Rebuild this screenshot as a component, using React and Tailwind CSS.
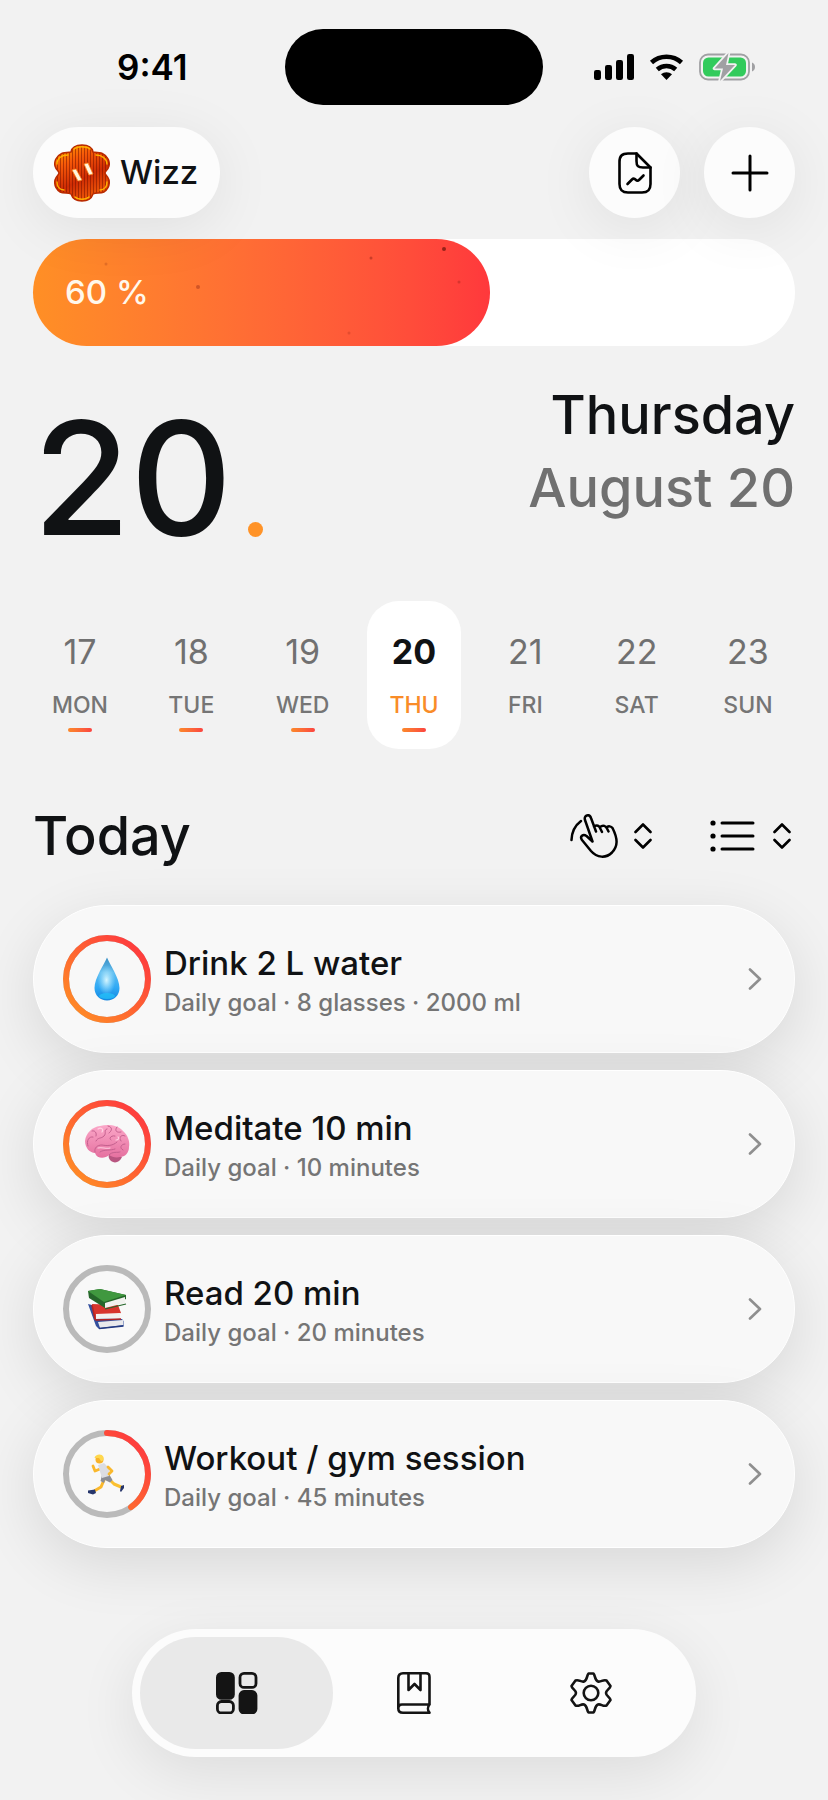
const week = [
  { date: 17, name: 'MON', done: true },
  { date: 18, name: 'TUE', done: true },
  { date: 19, name: 'WED', done: true },
  { date: 20, name: 'THU', done: true },
  { date: 21, name: 'FRI', done: false },
  { date: 22, name: 'SAT', done: false },
  { date: 23, name: 'SUN', done: false },
]

const habits = [
  { title: 'Drink 2 L water', goal: 'Daily goal · 8 glasses · 2000 ml', progress: 1, Icon: Drop },
  { title: 'Meditate 10 min', goal: 'Daily goal · 10 minutes', progress: 1, Icon: Brain },
  { title: 'Read 20 min', goal: 'Daily goal · 20 minutes', progress: 0, Icon: Books },
  { title: 'Workout / gym session', goal: 'Daily goal · 45 minutes', progress: 0.4, Icon: Runner },
]

function Drop() {
  return (
    <svg className="w-[46px] h-[46px]" viewBox="0 0 46 46">
      <defs>
        <linearGradient id="drop" x1="0" y1="0" x2="0" y2="1">
          <stop offset="0" stopColor="#3a8fc4" />
          <stop offset="0.35" stopColor="#5fbdf0" />
          <stop offset="0.7" stopColor="#2fa9f5" />
          <stop offset="1" stopColor="#1486e0" />
        </linearGradient>
        <radialGradient id="dropShine" cx="0.5" cy="0.5" r="0.5">
          <stop offset="0" stopColor="#d6f6ff" />
          <stop offset="1" stopColor="#a5e6ff" stopOpacity="0" />
        </radialGradient>
      </defs>
      <path d="M23 1.500C26 9 35.500 22 35.500 32C35.500 39.500 30 44.500 23 44.500S10.500 39.500 10.500 32C10.500 22 20 9 23 1.500Z" fill="url(#drop)" />
      <ellipse cx="22.500" cy="24" rx="9" ry="15" fill="url(#dropShine)" />
      <ellipse cx="23" cy="40" rx="8" ry="3" fill="#25c4fb" opacity="0.7" />
    </svg>
  )
}

function Brain() {
  return (
    <svg className="w-[46px] h-[46px]" viewBox="0 0 46 46" strokeLinecap="round">
      <defs>
        <linearGradient id="brain" x1="0" y1="0" x2="0" y2="1">
          <stop offset="0" stopColor="#fba7c8" />
          <stop offset="1" stopColor="#e5709f" />
        </linearGradient>
      </defs>
      <path d="M25 34C29 33 35 33 38 36C36 41 31 43 27 40C25 38 24 36 25 34Z" fill="#b85580" />
      <path d="M1 20C2 12 8 6 16 5C24 3 34 4 39 10C44 14 46 21 45 26C45 32 41 36 36 36C32 37 28 36 25 34C21 38 13 38 11 32C6 32 1 27 1 20Z" fill="url(#brain)" />
      <path d="M11 31C10 27 13 24 18 24C23 25 29 25 33 21M4 25C2 20 5 15 9 16M8 10C11 9 13 12 12 15M12 20C14 16 17 18 20 15S19 9 23 8M24 5C29 6 28 10 25 12M27 19C24 17 28 14 31 15M33 6C30 10 33 12 37 11M37 20C34 16 38 13 41 15M39 29C35 27 37 23 41 23M16 31C20 28 26 30 31 28M25 34C28 30 34 32 36 31" fill="none" stroke="#c4608e" strokeWidth="1" />
      <path d="M14 8C17 6 20 8 18 11M34 16C36 17 34 19 32 19M14 27C18 26 22 28 26 27" fill="none" stroke="#ffd0e2" strokeWidth="1.200" />
    </svg>
  )
}

function Books() {
  return (
    <svg className="w-[46px] h-[46px]" viewBox="0 0 46 46" strokeLinejoin="round">
      <path d="M4 18L8 19L12 32L38 33L39.500 35L39.500 40L15 43L12 40Z" fill="#34509e" />
      <path d="M14 36L39 34L39 39L16 42Z" fill="#e9e9ec" />
      <path d="M15 42.500L39.500 40" stroke="#243a80" strokeWidth="1.500" />
      <path d="M8 18L34 19L37 27L11 33Z" fill="#d7352d" />
      <path d="M8 19L11 33L12 34L37 33" fill="none" stroke="#b52321" strokeWidth="1.500" />
      <path d="M12 28L36 27L36 32L12 33Z" fill="#f2f1ef" />
      <path d="M4 5L16 3L42 9L42 13L21 22L5 12Z" fill="#25662a" />
      <path d="M4 5L16 3L42 9L20 16Z" fill="#40983f" />
      <path d="M21 17L41 11L41 17L21 22Z" fill="#f1f1ee" />
      <path d="M21 23L42 18" stroke="#25662a" strokeWidth="1.200" />
    </svg>
  )
}

function Runner() {
  return (
    <svg className="w-[46px] h-[46px]" viewBox="0 0 46 46" fill="none" strokeLinecap="round" strokeLinejoin="round">
      <path d="M16 18L11 20L9 15" stroke="#fab82c" strokeWidth="2.800" />
      <path d="M20 29L17 36L11 39.500" stroke="#fab82c" strokeWidth="3" />
      <path d="M26 29L30 33L37 36" stroke="#fbc02f" strokeWidth="3" />
      <path d="M4 39.500L11 38.500L12 42L9 43.500L4 42Z" fill="#26356b" />
      <path d="M40 34L40 37L37 41L36 40L37 35Z" fill="#26356b" />
      <path d="M18 24L25 23L28.500 29L26 31.500L21 29L20 32L16.500 30Z" fill="#8b8d94" />
      <path d="M14 14L20 12L25 17L25 25L18 27Z" fill="#dcdde2" />
      <path d="M24 16L28 20L25 23" stroke="#fab82c" strokeWidth="2.800" />
      <circle cx="15.500" cy="8.500" r="4" fill="#f8b32a" />
      <path d="M10.500 7C11 3 18 2 19.500 6C20 9 18 11 17 10L15 7Z" fill="#ffd84e" />
    </svg>
  )
}

function Avatar() {
  return (
    <svg className="w-14 h-[58px]" viewBox="0 0 56 58">
      <defs>
        <linearGradient id="avatar" x1="0.100" y1="0" x2="0.600" y2="1">
          <stop offset="0" stopColor="#ffa200" />
          <stop offset="0.300" stopColor="#f85a08" />
          <stop offset="0.650" stopColor="#cf2c04" />
          <stop offset="1" stopColor="#f05a08" />
        </linearGradient>
        <pattern id="ribs" width="3" height="58" patternUnits="userSpaceOnUse">
          <rect width="1" height="58" fill="#6e0f00" opacity="0.500" />
        </pattern>
        <path id="flower" d="M17 8C18 3 21 1 28 1S38 3 39 8C42 9 47 8 49 10C54 12 56 18 55 22C54 26 51 27 51 29S54 32 55 36C56 41 54 45 50 48C46 50 42 48 39 50C37 56 33 57 28 57S19 56 17 50C14 48 10 50 6 48C2 45 0 41 1 36C2 32 5 31 5 29S2 26 1 22C0 18 2 12 7 10C9 8 14 9 17 8Z" />
      </defs>
      <use href="#flower" fill="url(#avatar)" />
      <use href="#flower" fill="url(#ribs)" stroke="#b92a00" strokeWidth="1.500" />
      <path d="M3 20C3 14 8 11 14 11M42 11C48 11 53 15 53 20M20 5C23 2 33 2 36 5M3 38C3 43 6 46 10 46M53 38C53 43 50 46 46 46M21 53C24 56 32 56 35 53" fill="none" stroke="#ffb000" strokeWidth="1.400" strokeLinecap="round" />
      <path d="M18 26L22 25L28 36L24 37ZM30 20L34 19L39 30L35 31Z" fill="#fff6e0" stroke="#ff8a1f" strokeWidth="0.800" />
    </svg>
  )
}

function UpDown() {
  return (
    <svg className="w-[18px] h-[26px]" viewBox="0 0 18 26" fill="none" stroke="currentColor" strokeWidth="2.600" strokeLinecap="round" strokeLinejoin="round">
      <path d="M1.500 9L9 1.500L16.500 9M1.500 17L9 24.500L16.500 17" />
    </svg>
  )
}

function StatusBar() {
  return (
    <div className="grid grid-cols-[1fr_258px_1fr] items-center h-[76px]">
      <div className="pl-[84px] text-[35px] leading-10 font-semibold text-black">9:41</div>
      <div className="h-[76px] rounded-full bg-black" />
      <div className="flex items-center pl-[51px]">
        <svg className="w-10 h-[26px]" viewBox="0 0 40 26">
          <rect x="0" y="16" width="7" height="10" rx="2.200" />
          <rect x="11" y="11" width="7" height="15" rx="2.200" />
          <rect x="22" y="6" width="7" height="20" rx="2.200" />
          <rect x="33" y="0" width="7" height="26" rx="2.200" />
        </svg>
        <svg className="ml-[15px] w-[35px] h-[26px]" viewBox="0 0 35 26">
          <path d="M2.500 8.500C11 0.800 24 0.800 32.500 8.500M8.300 15.500C13.500 10.800 21.500 10.800 26.700 15.500" fill="none" stroke="#000" strokeWidth="4.600" />
          <path d="M12 20.300C15 17.500 20 17.500 23 20.300L17.500 26Z" />
        </svg>
        <svg className="ml-[15px] w-[57px] h-7" viewBox="0 0 57 28">
          <rect x="1" y="1.500" width="49" height="25" rx="8" fill="none" stroke="#a0a0a3" strokeWidth="1.800" />
          <path d="M53 9.500C57 11 57 17 53 18.500Z" fill="#a0a0a3" />
          <rect x="4" y="4.500" width="43" height="19" rx="5.500" fill="#32cb5c" />
          <path d="M29.500 0L15.500 15.500H24L21 28L36 12H27Z" fill="#a0a0a3" stroke="#f2f2f2" strokeWidth="3.500" strokeLinejoin="round" paintOrder="stroke" />
        </svg>
      </div>
    </div>
  )
}

function Header() {
  const round = 'flex items-center justify-center size-[91px] rounded-full bg-[#fcfcfc] shadow-[0_10px_60px_rgba(0,0,0,0.080)]'
  return (
    <header className="relative z-10 mt-[22px] flex items-center justify-between">
      <button className="flex items-center gap-2.5 h-[91px] pl-[21px] pr-[22px] rounded-full bg-[#fcfcfc] text-[33px] font-medium shadow-[0_10px_60px_rgba(0,0,0,0.080)]">
        <Avatar />
        Wizz
      </button>
      <div className="flex gap-6">
        <button className={round} aria-label="Report">
          <svg className="w-[34px] h-[42px]" viewBox="0 0 34 42" fill="none" stroke="#000" strokeWidth="2.600" strokeLinecap="round" strokeLinejoin="round">
            <path d="M18.500 1.500H10C4 1.500 1.500 4 1.500 10V32C1.500 38 4 40.500 10 40.500H24C30 40.500 32.500 38 32.500 32V15.500L18.500 1.500Z" />
            <path d="M18.500 1.500V9C18.500 14 20 15.500 25 15.500H32.500" />
            <path d="M9.500 32L14 27.500C15.500 26 16.500 26.500 18 28S20 29 21.500 27.500L25.500 23.500" />
          </svg>
        </button>
        <button className={round} aria-label="Add habit">
          <svg className="size-[38px]" viewBox="0 0 38 38" stroke="#000" strokeWidth="3" strokeLinecap="round">
            <path d="M19 2V36M2 19H36" />
          </svg>
        </button>
      </div>
    </header>
  )
}

function HabitCard({ habit, index }) {
  const { title, goal, progress, Icon } = habit
  return (
    <a href="#" className="flex items-center h-[148px] pl-7 pr-8 rounded-full bg-[#f8f8f8] border border-white shadow-[0_16px_60px_rgba(0,0,0,0.110)]">
      <div className="grid place-items-center shrink-0">
        <svg className="col-start-1 row-start-1 size-[90px] -rotate-90" viewBox="0 0 90 90" fill="none" strokeWidth="6">
          <defs>
            <linearGradient id={`ring${index}`} x1="0.100" y1="0.100" x2="0.850" y2="0.850">
              <stop offset="0" stopColor="#ff8a26" />
              <stop offset="1" stopColor="#fe3f3d" />
            </linearGradient>
          </defs>
          <circle cx="45" cy="45" r="41" stroke="#bababa" />
          {progress > 0 && (
            <circle cx="45" cy="45" r="41" stroke={`url(#ring${index})`} strokeLinecap="round" pathLength="100" strokeDasharray={`${progress * 100} 100`} />
          )}
        </svg>
        <div className="col-start-1 row-start-1">
          <Icon />
        </div>
      </div>
      <div className="ml-3 pt-1.5 flex-1">
        <h3 className="text-[33px] leading-[42px] font-medium">{title}</h3>
        <p className="text-2xl leading-[38px] font-medium text-[#757575]">{goal}</p>
      </div>
      <svg className="w-3.5 h-[22px]" viewBox="0 0 14 22" fill="none" stroke="#8f8f8f" strokeWidth="2.600" strokeLinecap="round" strokeLinejoin="round">
        <path d="M2 1.500L12 11L2 20.500" />
      </svg>
    </a>
  )
}

function TabBar() {
  const tab = 'flex flex-1 items-center justify-center h-full rounded-full'
  return (
    <nav className="mt-[81px] mx-auto flex w-[564px] h-32 p-2 rounded-full bg-[#fcfcfc] text-[#141414] shadow-[0_16px_60px_rgba(0,0,0,0.090)]">
      <button className={`${tab} bg-[#e9e9e9]`} aria-label="Dashboard">
        <svg className="size-[42px]" viewBox="0 0 42 42" fill="none" stroke="currentColor" strokeWidth="2.800">
          <rect x="1.400" y="1.400" width="16" height="25" rx="4" fill="currentColor" />
          <rect x="24" y="1.400" width="16" height="14" rx="4" />
          <rect x="1.400" y="29.500" width="16" height="11.500" rx="4" />
          <rect x="24" y="19.500" width="16" height="21.500" rx="4" fill="currentColor" />
        </svg>
      </button>
      <button className={`${tab} -ml-4`} aria-label="Journal">
        <svg className="w-[34px] h-[42px]" viewBox="0 0 34 42" fill="none" stroke="currentColor" strokeWidth="2.600" strokeLinecap="round" strokeLinejoin="round">
          <path d="M32.500 32.500V5C32.500 2.500 31.500 1.300 29 1.300H6C3 1.300 1.300 3 1.300 6V36.500C1.300 39.500 3 40.700 6 40.700H32.500C30.500 38.500 30.500 35 32.500 32.500H5C2.500 32.500 1.300 34 1.300 36.500" />
          <path d="M11.500 1.500V18L17.500 12L23.500 18V1.500" />
        </svg>
      </button>
      <button className={`${tab} -ml-4`} aria-label="Settings">
        <svg className="size-[42px]" viewBox="0 0 42 42" fill="none" stroke="currentColor" strokeWidth="2.600" strokeLinejoin="round">
          <path d="M18.500 1.500H23.500C25.500 4 24.500 8 28 9.500C31 10.500 33 7 36.500 8.500L40.500 14C40 17 36 18 36 21S40 25 40.500 28L36.500 33.500C33 35 31 31.500 28 32.500C24.500 34 25.500 38 23.500 40.500H18.500C16.500 38 17.500 34 14 32.500C11 31.500 9 35 5.500 33.500L1.500 28C2 25 6 24 6 21S2 17 1.500 14L5.500 8.500C9 7 11 10.500 14 9.500C17.500 8 16.500 4 18.500 1.500Z" />
          <circle cx="21" cy="21" r="7.300" />
        </svg>
      </button>
    </nav>
  )
}

function App() {
  return (
    <div className="min-h-screen bg-[#f2f2f2] px-[33px] pt-[29px] pb-11 text-[#101214] font-['Inter',sans-serif]">
      <StatusBar />
      <Header />

      {/* day progress */}
      <div className="relative mt-[21px] h-[107px] rounded-full bg-white">
        <div className="flex items-center w-3/5 h-full pl-8 rounded-full bg-linear-to-r from-[#ff8f25] via-[#ff6a35] to-[#ff383c] text-[33px] font-medium text-[#fff8ec]">
          60 %
        </div>
        <svg className="absolute inset-0 size-full" viewBox="0 0 762 107" fill="#7a1a10">
          <circle cx="411" cy="10" r="2" opacity="0.800" />
          <circle cx="338" cy="19" r="1.500" opacity="0.400" />
          <circle cx="165" cy="48" r="2" opacity="0.350" />
          <circle cx="426" cy="43" r="1.500" opacity="0.300" />
          <circle cx="73" cy="25" r="1.500" opacity="0.200" />
          <circle cx="316" cy="94" r="1.500" opacity="0.200" />
        </svg>
      </div>

      <section className="mt-8 flex justify-between">
        <div className="flex items-end">
          <span className="mt-1 text-[158px] leading-[192px] font-medium">20</span>
          <span className="mb-[37px] ml-4 size-[15px] rounded-full bg-[#ff9328]" />
        </div>
        <div className="text-right text-[54px] leading-[73px] font-medium">
          <h1>Thursday</h1>
          <p className="text-[#707070]">August 20</p>
        </div>
      </section>

      <div className="mt-[27px] flex justify-between">
        {week.map((day) => {
          const active = day.date === 20
          return (
            <button key={day.date} className={`flex flex-col items-center w-[94px] h-[148px] pt-[30px] rounded-[32px] ${active ? 'bg-white' : ''}`}>
              <span className={`text-[34px] leading-[42px] ${active ? 'font-bold' : 'text-[#707070]'}`}>{day.date}</span>
              <span className={`mt-3 text-[23px] leading-[40px] font-medium ${active ? 'text-[#f98c28]' : 'text-[#757575]'}`}>{day.name}</span>
              {day.done && <span className="mt-[3px] w-6 h-1 rounded-full bg-linear-to-r from-[#fb8829] to-[#fb4240]" />}
            </button>
          )
        })}
      </div>

      <div className="mt-[51px] flex items-center justify-between">
        <h2 className="text-[54px] leading-[72px] font-medium">Today</h2>
        <div className="flex items-center gap-[57px] pr-1 text-black">
          <button className="flex items-center gap-4" aria-label="Gesture mode">
            <svg className="w-12 h-[44px]" viewBox="0 0 48 44" fill="none" stroke="currentColor" strokeWidth="2.500" strokeLinecap="round" strokeLinejoin="round">
              <path d="M1.500 26C1.800 18 5 11.500 11 7" />
              <path d="M22.500 27.500L15 6C13.500 1 19.500 -0.500 21 4L26 17.500M22.500 27.500L16.500 22C13 19.500 9.500 22.500 12 26L21 37C27 44 36 44.500 42 38.500C48 32 48 25 42.500 14C41 12 38.500 12 37 13M24 12.500C27 10.500 29.500 12 30 14L32 18M30 13C33 10.500 36 12 37 14.500L38.500 17.500" />
            </svg>
            <UpDown />
          </button>
          <button className="flex items-center gap-[18px]" aria-label="List view">
            <svg className="w-[46px] h-8" viewBox="0 0 46 32" stroke="currentColor" strokeWidth="3" strokeLinecap="round">
              <path d="M13 3H44M13 16H44M13 29H44" />
              <path d="M4 3H4.010M4 16H4.010M4 29H4.010" strokeWidth="5.200" />
            </svg>
            <UpDown />
          </button>
        </div>
      </div>

      <div className="mt-[33px] flex flex-col gap-[17px]">
        {habits.map((habit, i) => (
          <HabitCard key={habit.title} habit={habit} index={i} />
        ))}
      </div>

      <TabBar />
    </div>
  )
}

export default App
